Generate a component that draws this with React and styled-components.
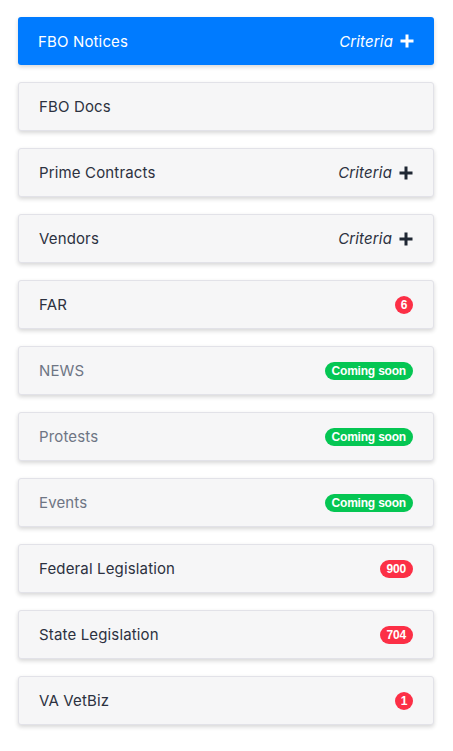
import React from "react";
import styled, { createGlobalStyle } from "styled-components";

const Global = createGlobalStyle`
  html, body { margin: 0; padding: 0; background: #ffffff; }
  body { font-family: Inter, "Open Sans", "Liberation Sans", sans-serif; }
`;

const List = styled.div`
  display: flex;
  flex-direction: column;
  gap: 17px;
  width: 416px;
  padding: 17px 0 20px 18px;
`;

const Card = styled.div`
  box-sizing: border-box;
  height: ${(p) => (p.$active ? "48px" : "49px")};
  display: flex;
  align-items: center;
  justify-content: space-between;
  padding: 0 20px;
  border-radius: 3px;
  background: ${(p) => (p.$active ? "#007bff" : "#f6f6f7")};
  border: ${(p) => (p.$active ? "none" : "1px solid #e2e2e8")};
  box-shadow: 0 2px 4px rgba(0, 0, 0, 0.16);
  color: ${(p) => (p.$active ? "#ffffff" : p.$muted ? "#6e7584" : "#2c3140")};
  font-size: 15px;
  letter-spacing: 0.15px;
`;

const Title = styled.span``;

const Criteria = styled.span`
  display: flex;
  align-items: center;
  gap: 7px;
  font-style: italic;
  font-size: 15px;
`;

const Badge = styled.span`
  box-sizing: border-box;
  display: inline-flex;
  align-items: center;
  justify-content: center;
  height: 18px;
  min-width: 18px;
  padding: 0 ${(p) => (p.$single ? "0" : "7px")};
  border-radius: 9px;
  background: ${(p) => (p.$green ? "#05c653" : "#fc2f46")};
  color: #fff;
  font-family: "Liberation Sans", Arial, sans-serif;
  font-weight: 700;
  font-size: 12px;
  letter-spacing: -0.2px;
`;

const Plus = ({ color }) => (
  <svg width="14" height="14" viewBox="0 0 14 14">
    <path d="M7 0.5v13M0.5 7h13" stroke={color} strokeWidth="3" />
  </svg>
);

const items = [
  { t: "FBO Notices", active: true, criteria: true },
  { t: "FBO Docs" },
  { t: "Prime Contracts", criteria: true },
  { t: "Vendors", criteria: true },
  { t: "FAR", badge: "6" },
  { t: "NEWS", muted: true, soon: true },
  { t: "Protests", muted: true, soon: true },
  { t: "Events", muted: true, soon: true },
  { t: "Federal Legislation", badge: "900" },
  { t: "State Legislation", badge: "704" },
  { t: "VA VetBiz", badge: "1" },
];

export default function App() {
  return (
    <>
      <Global />
      <List>
        {items.map((it) => (
          <Card key={it.t} $active={it.active} $muted={it.muted}>
            <Title>{it.t}</Title>
            {it.criteria && (
              <Criteria>
                Criteria <Plus color={it.active ? "#ffffff" : "#1f2733"} />
              </Criteria>
            )}
            {it.badge && <Badge $single={it.badge.length === 1}>{it.badge}</Badge>}
            {it.soon && <Badge $green>Coming soon</Badge>}
          </Card>
        ))}
      </List>
    </>
  );
}
